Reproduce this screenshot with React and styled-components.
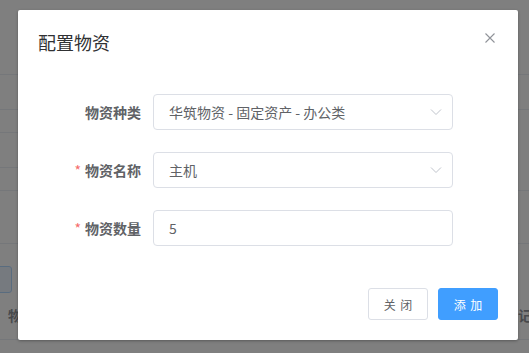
import React from 'react';
import styled, { createGlobalStyle } from 'styled-components';

const GlobalStyle = createGlobalStyle`
  html, body {
    margin: 0;
    padding: 0;
  }
  body {
    font-family: "Noto Sans CJK SC", "Noto Sans", sans-serif;
  }
`;

const Page = styled.div`
  position: relative;
  width: 529px;
  height: 353px;
  overflow: hidden;
  background: #fff;
`;

// page behind the dialog
const Backdrop = styled.div`
  display: flex;
  height: 100%;
`;

const Strip = styled.div`
  display: flex;
  flex-direction: column;
  width: ${p => p.$width || 'auto'};
  flex: ${p => (p.$grow ? 1 : 'none')};
`;

const Line = styled.div`
  height: ${p => p.$h}px;
  flex: none;
  box-sizing: border-box;
  border-bottom: 1px solid #ebeef5;
`;

const Toolbar = styled.div`
  height: 96px;
  box-sizing: border-box;
  border-bottom: 1px solid #ebeef5;
  display: flex;
  flex-direction: column;
  align-items: ${p => (p.$right ? 'flex-end' : 'flex-start')};
`;

const PlainButton = styled.div`
  margin-top: 22px;
  margin-left: -8px;
  width: 20px;
  height: 27px;
  box-sizing: border-box;
  border: 1px solid #b3d8ff;
  border-radius: 3px;
  background: #ecf5ff;
`;

const HeadCell = styled.div`
  margin-top: ${p => (p.$right ? 61 : 12)}px;
  margin-left: ${p => (p.$right ? 0 : 8)}px;
  margin-right: ${p => (p.$right ? -3 : 0)}px;
  font-size: 14px;
  line-height: 20px;
  font-weight: 700;
  color: #909399;
  white-space: nowrap;
`;

const Overlay = styled.div`
  position: absolute;
  inset: 0;
  background: rgba(0, 0, 0, 0.5);
  display: flex;
  align-items: flex-start;
  padding: 10px 0 0 18px;
`;

const Dialog = styled.div`
  width: 500px;
  background: #fff;
  border-radius: 2px;
  box-shadow: 0 1px 3px rgba(0, 0, 0, 0.3);
  display: flex;
  flex-direction: column;
`;

const Header = styled.div`
  display: flex;
  justify-content: space-between;
  align-items: flex-start;
  padding: 20px 23px 10px 20px;
`;

const Title = styled.span`
  font-size: 18px;
  line-height: 24px;
  color: #303133;
`;

const CloseButton = styled.button`
  margin-top: 3px;
  padding: 0;
  border: none;
  background: none;
  width: 10px;
  height: 10px;
  display: flex;
  cursor: pointer;
`;

const Body = styled.div`
  display: flex;
  flex-direction: column;
  gap: 22px;
  padding: 30px 20px 32px;
`;

const FormItem = styled.div`
  display: flex;
  align-items: center;
  height: 36px;
`;

const Label = styled.label`
  width: 115px;
  box-sizing: border-box;
  padding-right: 12px;
  text-align: right;
  font-size: 14px;
  font-weight: 700;
  color: #606266;
`;

const Star = styled.span`
  color: #f56c6c;
  margin-right: 4px;
  font-weight: 400;
`;

const Field = styled.div`
  width: 300px;
  height: 36px;
  box-sizing: border-box;
  border: 1px solid #dcdfe6;
  border-radius: 4px;
  padding: 0 10px 0 15px;
  display: flex;
  align-items: center;
  justify-content: space-between;
  font-size: 14px;
  color: #606266;
`;

const Footer = styled.div`
  display: flex;
  justify-content: flex-end;
  gap: 10px;
  padding: 10px 20px 20px;
`;

const Button = styled.button`
  height: 32px;
  width: 60px;
  box-sizing: border-box;
  border-radius: 3px;
  border: 1px solid ${p => (p.$primary ? '#409eff' : '#dcdfe6')};
  background: ${p => (p.$primary ? '#409eff' : '#fff')};
  color: ${p => (p.$primary ? '#fff' : '#606266')};
  font-family: inherit;
  font-size: 12px;
  word-spacing: 2px;
  padding: 0;
  cursor: pointer;
`;

const Chevron = () => (
  <svg width="12" height="12" viewBox="0 0 12 12">
    <polyline points="1,3.5 6,8.5 11,3.5" fill="none" stroke="#c0c4cc" strokeWidth="1" />
  </svg>
);

const CloseIcon = () => (
  <svg width="10" height="10" viewBox="0 0 10 10">
    <path d="M0.5 0.5 L9.5 9.5 M9.5 0.5 L0.5 9.5" stroke="#909399" strokeWidth="1.1" />
  </svg>
);

const fields = [
  { label: '物资种类', value: '华筑物资 - 固定资产 - 办公类', select: true },
  { label: '物资名称', value: '主机', select: true, required: true },
  { label: '物资数量', value: '5', required: true },
];

export default function App() {
  return (
    <Page>
      <GlobalStyle />
      <Backdrop>
        <Strip $width="18px">
          <Line $h={75} />
          <Line $h={35} />
          <Line $h={23} />
          <Line $h={35} />
          <Line $h={23} />
          <Line $h={53} />
          <Toolbar>
            <PlainButton />
            <HeadCell>物资</HeadCell>
          </Toolbar>
        </Strip>
        <Strip $grow>
          <Line $h={75} />
          <Line $h={35} />
          <Line $h={81} />
          <Line $h={53} />
          <Toolbar $right>
            <HeadCell $right>登记</HeadCell>
          </Toolbar>
        </Strip>
      </Backdrop>
      <Overlay>
        <Dialog>
          <Header>
            <Title>配置物资</Title>
            <CloseButton aria-label="close">
              <CloseIcon />
            </CloseButton>
          </Header>
          <Body>
            {fields.map(f => (
              <FormItem key={f.label}>
                <Label>
                  {f.required && <Star>*</Star>}
                  {f.label}
                </Label>
                <Field>
                  <span>{f.value}</span>
                  {f.select && <Chevron />}
                </Field>
              </FormItem>
            ))}
          </Body>
          <Footer>
            <Button>关 闭</Button>
            <Button $primary>添 加</Button>
          </Footer>
        </Dialog>
      </Overlay>
    </Page>
  );
}
